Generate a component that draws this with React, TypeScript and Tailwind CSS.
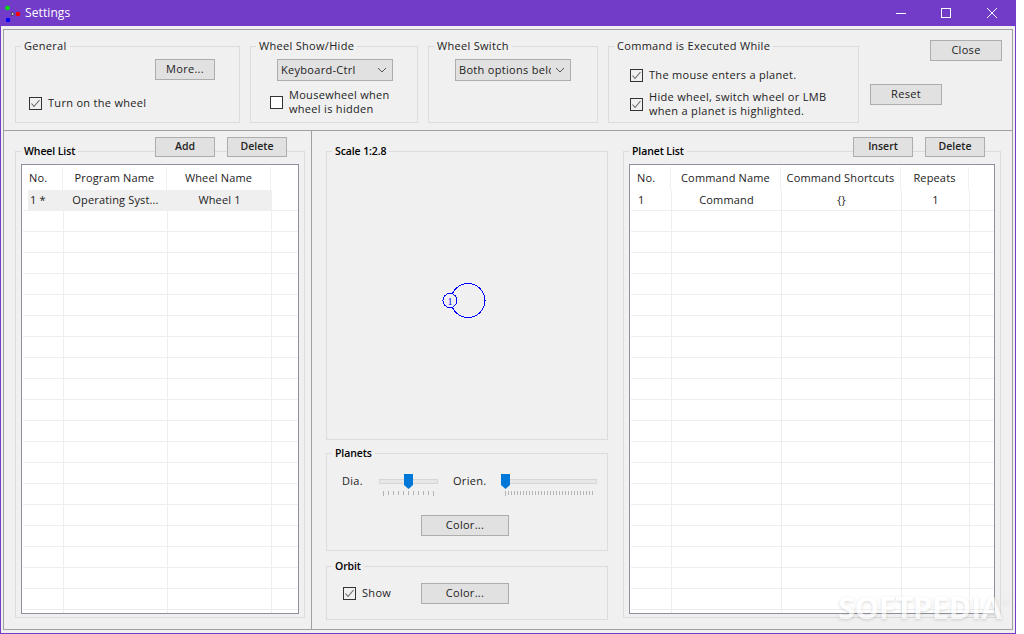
import React from "react";

const FONT = "font-['Open_Sans','Noto_Sans',sans-serif]";

function Btn({ children, className = "", bold = false }: { children: React.ReactNode; className?: string; bold?: boolean }) {
  return (
    <button className={`flex items-center justify-center border border-[#adadad] bg-[#e1e1e1] text-[#222] ${bold ? "text-[10.5px] font-semibold tracking-[0px]" : "text-[11px] tracking-[0.3px]"} ${className}`}>
      {children}
    </button>
  );
}

function Check({ checked = true }: { checked?: boolean }) {
  return (
    <span className={`flex h-[13px] w-[13px] shrink-0 items-center justify-center border border-[#333] ${checked ? "bg-[#f0f0f0]" : "bg-white"}`}>
      {checked && (
        <svg width="11" height="11" viewBox="0 0 11 11" fill="none">
          <path d="M1.5 5.5 L4 8.5 L9.5 2" stroke="#666" strokeWidth="1.1" />
        </svg>
      )}
    </span>
  );
}

function Group({ title, bold = false, className = "", legend = "ml-[5px]", children }: { title: string; bold?: boolean; className?: string; legend?: string; children?: React.ReactNode }) {
  return (
    <fieldset className={`min-w-0 border border-[#dcdcdc] ${className}`}>
      <legend className={`${legend} h-[16px] px-[3px] leading-[16px] ${bold ? "text-[10.5px] font-semibold tracking-[-0.1px] text-black" : "text-[11px] tracking-[0.3px] text-[#222]"}`}>{title}</legend>
      {children}
    </fieldset>
  );
}

function Combo({ text, className = "" }: { text: string; className?: string }) {
  return (
    <div className={`flex h-[22px] w-[116px] items-center border border-[#adadad] bg-[#e1e1e1] pl-[3px] pr-[5px] ${className}`}>
      <span className="w-[92px] overflow-hidden whitespace-nowrap text-[11px] tracking-[0.3px] text-[#222]">{text}</span>
      <svg className="ml-auto shrink-0" width="10" height="6" viewBox="0 0 10 6" fill="none">
        <path d="M1 1 L5 5 L9 1" stroke="#555" strokeWidth="1" />
      </svg>
    </div>
  );
}

function GridTable({ cols, headers, row, selected = false }: { cols: string; headers: string[]; row: string[]; selected?: boolean }) {
  const blank = Array.from({ length: 20 });
  return (
    <div className="h-[450px] overflow-hidden border border-[#8f8f9d] bg-white">
      <div className={`grid h-[25px] ${cols} pt-[2px] text-[11px] tracking-[0.15px] text-[#222]`}>
        {headers.map((h, i) => (
          <div key={h} className={`flex items-center border-r border-[#f0f0f0] ${i === 0 ? "pl-[7px]" : "justify-center"}`}>{h}</div>
        ))}
      </div>
      <div className={`grid h-[21px] ${cols} ml-[1px] border-b border-[#eeeeee] text-[11px] tracking-[0.15px] text-[#222]`}>
        {row.map((c, i) => (
          <div
            key={i}
            className={`flex items-center border-r ${i === 0 ? (selected ? "ml-[5px] pl-[2px]" : "pl-[7px] ") : "justify-center"} ${selected && i < 3 ? "border-[#efefef] bg-[#efefef]" : "border-[#eeeeee]"}`}
          >
            {c}
          </div>
        ))}
        <div />
      </div>
      {blank.map((_, n) => (
        <div key={n} className={`grid h-[21px] ${cols} ml-[1px] border-b border-[#eeeeee]`}>
          {headers.map((h) => (
            <div key={h} className="border-r border-[#eeeeee]" />
          ))}
          <div />
        </div>
      ))}
    </div>
  );
}

function Slider({ width, thumb, ticks, className = "" }: { width: string; thumb: string; ticks: string; className?: string }) {
  return (
    <div className={`relative h-[24px] shrink-0 ${width} ${className}`}>
      <div className="mt-[7px] h-[5px] border border-[#d6d6d6] bg-[#e7e7e7]" />
      <svg className={`absolute top-[2px] ${thumb}`} width="9" height="15" viewBox="0 0 9 15">
        <path d="M0 0 H9 V11 L4.5 15 L0 11 Z" fill="#0078d7" />
      </svg>
      <svg className="mt-[7px] block" width="100%" height="5">
        <path d={ticks} stroke="#b4b4b4" strokeWidth="1" />
      </svg>
    </div>
  );
}

function ticksPath(from: number, to: number, step: number) {
  let d = "";
  for (let x = from; x <= to; x += step) {
    const end = x === from || x === to ? 5 : 4;
    d += `M${x + 0.5} 0 V${end} `;
  }
  return d;
}

export default function App() {
  return (
    <div className={`h-[634px] w-[1024px] overflow-hidden bg-white ${FONT}`}>
      <div className="flex h-[634px] w-[1016px] flex-col border-x border-b border-[#733cc8] bg-[#f0f0f0]">
        {/* Title bar */}
        <div className="flex h-[26px] shrink-0 items-center bg-[#733cc8] text-white">
          <svg className="ml-[3px] shrink-0" width="20" height="24" viewBox="0 0 20 24">
            <circle cx="3.5" cy="7" r="2.3" fill="#00e000" />
            <circle cx="14" cy="13" r="2.3" fill="#ff0000" />
            <circle cx="4" cy="19" r="2.3" fill="#0000ff" />
            <path d="M7.5 11 L10.5 13 L7.5 15 Z" fill="#ddd" stroke="#222" strokeWidth="0.6" />
          </svg>
          <span className="ml-[1px] text-[12px] tracking-[0.1px]">Settings</span>
          <svg className="ml-auto mr-[18px] shrink-0" width="102" height="12" viewBox="0 0 102 12" fill="none" stroke="white" strokeWidth="1">
            <path d="M1 6.5 H11" />
            <rect x="46.5" y="1.5" width="9" height="9" />
            <path d="M92 1 L102 11 M102 1 L92 11" />
          </svg>
        </div>

        {/* Frame */}
        <div className="mx-[2px] mb-[3px] mt-[3px] flex min-h-0 flex-1 flex-col border border-[#a0a0a0]">
          {/* Top section */}
          <div className="flex h-[101px] shrink-0 items-start gap-[10px] border-b border-[#a0a0a0] pl-[11px] pt-[8px]">
            <Group title="General" className="h-[85px] w-[225px]">
              <Btn className="ml-[139px] mt-[5px] h-[21px] w-[60px]">More...</Btn>
              <div className="ml-[13px] mt-[15px] flex h-[16px] items-center gap-[6px] text-[11px] tracking-[0.3px] text-[#222]">
                <Check />
                <span>Turn on the wheel</span>
              </div>
            </Group>
            <Group title="Wheel Show/Hide" className="h-[85px] w-[168px]">
              <Combo text="Keyboard-Ctrl" className="ml-[26px] mt-[5px]" />
              <div className="ml-[19px] mt-[7px] flex items-center gap-[6px] text-[11px] leading-[14px] tracking-[0.3px] text-[#222]">
                <Check checked={false} />
                <span>Mousewheel when<br />wheel is hidden</span>
              </div>
            </Group>
            <Group title="Wheel Switch" className="h-[85px] w-[170px]">
              <Combo text="Both options below" className="ml-[26px] mt-[5px]" />
            </Group>
            <Group title="Command is Executed While" className="h-[85px] w-[251px]">
              <div className="ml-[21px] mt-[13px] flex h-[16px] items-center gap-[6px] text-[11px] tracking-[0.3px] text-[#222]">
                <Check />
                <span>The mouse enters a planet.</span>
              </div>
              <div className="ml-[21px] mt-[7px] flex items-center gap-[6px] text-[11px] leading-[14px] tracking-[0.3px] text-[#222]">
                <Check />
                <span>Hide wheel, switch wheel or LMB<br />when a planet is highlighted.</span>
              </div>
            </Group>
            <div className="ml-[1px] flex w-[132px] flex-col">
              <Btn className="mt-[2px] h-[21px] w-[72px] self-end">Close</Btn>
              <Btn className="mt-[23px] h-[21px] w-[72px]">Reset</Btn>
            </div>
          </div>

          {/* Bottom section */}
          <div className="flex min-h-0 flex-1">
            {/* Left */}
            <div className="w-[308px] shrink-0 border-r border-[#a0a0a0] pl-[11px] pt-[6px]">
              <div className="relative z-10 ml-[140px] flex gap-[12px]">
                <Btn bold className="h-[20px] w-[60px]">Add</Btn>
                <Btn bold className="h-[20px] w-[60px]">Delete</Btn>
              </div>
              <Group title="Wheel List" bold legend="ml-0" className="-mt-[14px] w-[290px] px-[5px] pb-[3px]">
                <div className="mt-[5px]">
                  <GridTable
                    cols="grid-cols-[41px_104px_104px_25px]"
                    headers={["No.", "Program Name", "Wheel Name"]}
                    row={["1 *", "Operating Syst...", "Wheel 1"]}
                    selected
                  />
                </div>
              </Group>
            </div>

            {/* Middle */}
            <div className="w-[311px] shrink-0 pl-[14px] pt-[12px]">
              <Group title="Scale 1:2.8" bold className="h-[297px] w-[282px]">
                <svg className="ml-[113px] mt-[121px] block" width="50" height="40" viewBox="0 0 50 40" fill="none" stroke="#0000ff" strokeWidth="1" shapeRendering="crispEdges">
                  <circle cx="28" cy="20.5" r="17" />
                  <circle cx="10" cy="20.5" r="7" fill="#f0f0f0" />
                  <text x="10" y="24.5" textAnchor="middle" fontSize="10" fontFamily="'Liberation Serif', serif" fill="#0000ff" stroke="none">1</text>
                </svg>
              </Group>
              <Group title="Planets" bold className="mt-[5px] h-[106px] w-[282px]">
                <div className="ml-[15px] mt-[11px] flex text-[11px] tracking-[0.3px] text-[#222]">
                  <span className="mt-[1px] w-[37px] shrink-0">Dia.</span>
                  <Slider width="w-[59px]" thumb="left-[25px]" ticks={ticksPath(4, 54, 5)} />
                  <span className="ml-[15px] mt-[1px] w-[48px] shrink-0">Orien.</span>
                  <Slider width="w-[96px]" thumb="left-0" ticks={ticksPath(4, 92, 3)} />
                </div>
                <Btn className="ml-[94px] mt-[19px] h-[21px] w-[88px]">Color...</Btn>
              </Group>
              <Group title="Orbit" bold className="mt-[7px] h-[62px] w-[282px]">
                <div className="ml-[16px] mt-[9px] flex items-center text-[11px] tracking-[0.3px] text-[#222]">
                  <Check />
                  <span className="ml-[6px] w-[59px]">Show</span>
                  <Btn className="h-[21px] w-[88px]">Color...</Btn>
                </div>
              </Group>
            </div>

            {/* Right */}
            <div className="flex-1 pt-[6px]">
              <div className="relative z-10 ml-[230px] flex gap-[12px]">
                <Btn bold className="h-[20px] w-[60px]">Insert</Btn>
                <Btn bold className="h-[20px] w-[60px]">Delete</Btn>
              </div>
              <Group title="Planet List" bold legend="ml-0" className="-mt-[14px] w-[378px] px-[5px] pb-[3px]">
                <div className="mt-[5px]">
                  <GridTable
                    cols="grid-cols-[41px_110px_120px_68px_24px]"
                    headers={["No.", "Command Name", "Command Shortcuts", "Repeats"]}
                    row={["1", "Command", "{}", "1"]}
                  />
                </div>
              </Group>
            </div>
          </div>
        </div>
      </div>

      {/* Watermark */}
      <div className="absolute left-[838px] top-[590px] z-20 text-[31px] font-bold leading-[34px] tracking-[-0.5px] text-white opacity-60 [text-shadow:0_1px_3px_rgba(0,0,0,0.25)]">
        SOFTPEDIA<sup className="align-super text-[8px] font-normal">®</sup>
      </div>
    </div>
  );
}
